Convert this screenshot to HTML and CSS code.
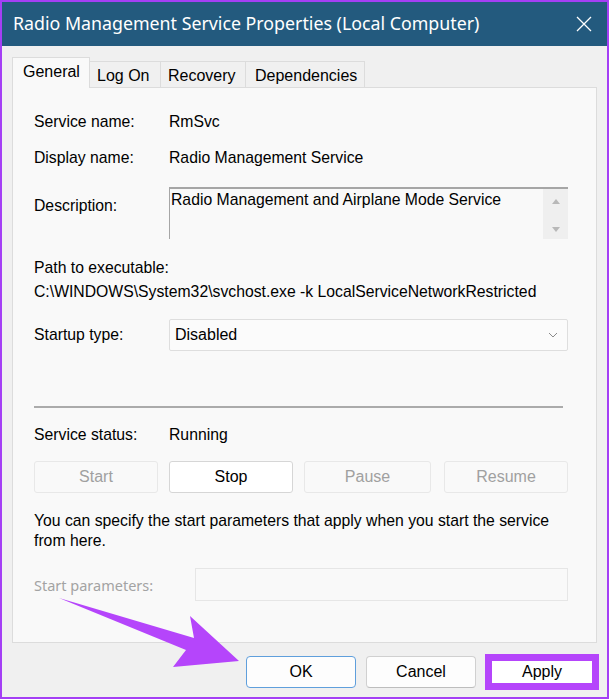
FILE: index.html
```html
<!DOCTYPE html>
<html>
<head>
<meta charset="utf-8">
<link rel="stylesheet" href="styles.css">
</head>
<body>
<div class="window">
  <div class="titlebar">
    <span class="title">Radio Management Service Properties (Local Computer)</span>
    <svg class="close" width="16" height="16" viewBox="0 0 16 16"><path d="M1 1 L15 15 M15 1 L1 15" stroke="#fff" stroke-width="1.3" fill="none"/></svg>
  </div>
  <div class="content">
    <div class="tabs">
      <div class="tab active">General</div>
      <div class="tab">Log On</div>
      <div class="tab">Recovery</div>
      <div class="tab">Dependencies</div>
    </div>
    <div class="panel">
      <div class="row r1"><span class="label">Service name:</span><span>RmSvc</span></div>
      <div class="row r2"><span class="label">Display name:</span><span>Radio Management Service</span></div>
      <div class="row r3">
        <span class="label desc-label">Description:</span>
        <div class="descbox">
          <div class="desctext">Radio Management and Airplane Mode Service</div>
          <div class="scroll">
            <svg width="10" height="8" viewBox="0 0 10 8"><path d="M1 7 L5 2 L9 7 Z" fill="#b8b8b8"/></svg>
            <svg width="10" height="8" viewBox="0 0 10 8"><path d="M1 1 L5 6 L9 1 Z" fill="#b8b8b8"/></svg>
          </div>
        </div>
      </div>
      <div class="pathlabel">Path to executable:</div>
      <div class="path">C:\WINDOWS\System32\svchost.exe -k LocalServiceNetworkRestricted</div>
      <div class="row r4">
        <span class="label">Startup type:</span>
        <div class="combo"><span>Disabled</span>
          <svg width="10" height="6" viewBox="0 0 10 6"><path d="M1 1 L5 5 L9 1" stroke="#8a8a8a" stroke-width="1" fill="none"/></svg>
        </div>
      </div>
      <div class="sep"></div>
      <div class="row r5"><span class="label">Service status:</span><span>Running</span></div>
      <div class="btns">
        <div class="btn disabled b-start">Start</div>
        <div class="btn b-stop">Stop</div>
        <div class="btn disabled b-pause">Pause</div>
        <div class="btn disabled b-resume">Resume</div>
      </div>
      <div class="note">You can specify the start parameters that apply when you start the service from here.</div>
      <div class="row r6">
        <span class="plabel">Start parameters:</span>
        <div class="pinput"></div>
      </div>
    </div>
  </div>
  <div class="footer">
    <div class="fbtn ok">OK</div>
    <div class="fbtn">Cancel</div>
    <div class="fbtn apply">Apply</div>
  </div>
  <svg class="arrow" width="609" height="699" viewBox="0 0 609 699">
    <path d="M59 598 L194 638 L190 616 L239 661 L173 667 L186 650 Z" fill="#b545fb"/>
  </svg>
</div>
</body>
</html>
```

FILE: styles.css
```css
html, body {
  margin: 0;
  padding: 0;
  background: #f0f0f0;
}
.window {
  position: relative;
  width: 609px;
  height: 699px;
  box-sizing: border-box;
  border: 2px solid #a43ff5;
  background: #f0f0f0;
  font-family: "Liberation Sans", Arial, sans-serif;
  font-size: 15.75px;
  color: #000;
  overflow: hidden;
}
.titlebar {
  height: 44px;
  background: #235a7e;
  display: flex;
  align-items: center;
  justify-content: space-between;
  padding: 0 15px 0 11px;
}
.title {
  font-family: "Noto Sans", "Open Sans", sans-serif;
  font-size: 17.8px;
  color: #fff;
  padding-bottom: 2px;
}
.close {
  margin-bottom: 1px;
}
.content {
  padding: 11px 8px 0 10px;
}
.tabs {
  display: flex;
  align-items: flex-end;
  height: 30px;
  position: relative;
  z-index: 1;
}
.tab {
  height: 26px;
  box-sizing: border-box;
  border: 1px solid #dcdcdc;
  border-bottom: none;
  border-left: none;
  background: #f0f0f0;
  padding: 4px 8px 0 7px;
  line-height: 20px;
  font-size: 16px;
}
.tab.active {
  height: 31px;
  background: #f9f9f9;
  border-left: 1px solid #dcdcdc;
  padding: 4px 10px 0 10px;
  margin-bottom: -1px;
  width: 78px;
}
.tab:nth-child(2) { width: 71px; }
.tab:nth-child(3) { width: 85px; }
.tab:nth-child(4) { width: 119px; padding-left: 9px; }
.panel {
  width: 585px;
  height: 556px;
  box-sizing: border-box;
  background: #f9f9f9;
  border: 1px solid #dcdcdc;
  padding: 24px 0 0 21px;
}
.row {
  display: flex;
  align-items: center;
  line-height: 20px;
}
.label {
  width: 135px;
  flex: none;
}
.r2 { margin-top: 16px; }
.r3 {
  margin-top: 19px;
  align-items: flex-start;
}
.desc-label { padding-top: 9px; }
.descbox {
  width: 399px;
  height: 52px;
  box-sizing: border-box;
  border-top: 2px solid #a6a6a6;
  border-left: 1px solid #a6a6a6;
  display: flex;
  justify-content: space-between;
  background: #f9f9f9;
}
.desctext {
  padding: 1px 0 0 1px;
  line-height: 20px;
}
.scroll {
  width: 25px;
  background: #efefef;
  display: flex;
  flex-direction: column;
  align-items: center;
  justify-content: space-between;
  padding: 8px 0 5px;
}
.pathlabel {
  margin-top: 17px;
  line-height: 24px;
}
.path {
  line-height: 24px;
}
.r4 { margin-top: 15px; }
.combo {
  width: 399px;
  height: 32px;
  box-sizing: border-box;
  border: 1px solid #dedede;
  border-radius: 2px;
  background: #fbfbfb;
  display: flex;
  align-items: center;
  justify-content: space-between;
  padding: 0 9px 0 5px;
  font-size: 16px;
}
.sep {
  width: 529px;
  height: 0;
  border-top: 2px solid #ababab;
  margin-top: 55px;
}
.r5 { margin-top: 17px; }
.btns {
  display: flex;
  margin-top: 16px;
}
.btn {
  width: 124px;
  height: 32px;
  box-sizing: border-box;
  border: 1px solid #d6d6d6;
  border-radius: 3px;
  background: #fff;
  display: flex;
  align-items: center;
  justify-content: center;
  font-size: 16px;
  flex: none;
}
.b-stop { margin-left: 11px; }
.b-pause { margin-left: 11px; width: 127px; }
.b-resume { margin-left: 13px; }
.btn.disabled {
  background: #f9f9f9;
  border-color: #e8e8e8;
  color: #a0a0a0;
}
.note {
  margin-top: 18px;
  width: 540px;
  line-height: 20px;
}
.r6 { margin-top: 17px; }
.plabel {
  width: 161px;
  flex: none;
  color: #a3a3a3;
  font-family: "Noto Sans", "Open Sans", sans-serif;
  font-size: 14.5px;
}
.pinput {
  width: 373px;
  height: 33px;
  box-sizing: border-box;
  border: 1px solid #e6e6e6;
  background: #f9f9f9;
}
.footer {
  display: flex;
  justify-content: flex-end;
  align-items: center;
  gap: 10px;
  padding: 11px 8px 0 0;
}
.fbtn {
  width: 110px;
  height: 32px;
  box-sizing: border-box;
  border: 1px solid #d0d0d0;
  border-bottom-color: #bdbdbd;
  border-radius: 4px;
  background: #fdfdfd;
  display: flex;
  align-items: center;
  justify-content: center;
  font-size: 16px;
}
.fbtn.ok {
  border: 1px solid #5f9fdc;
  background: #fdfdfd;
}
.fbtn.apply {
  width: 114px;
  height: 36px;
  border: 7px solid #b545fb;
  border-radius: 0;
  background: #fff;
  margin-left: -1px;
}
.arrow {
  position: absolute;
  left: -2px;
  top: -2px;
  pointer-events: none;
}
```
